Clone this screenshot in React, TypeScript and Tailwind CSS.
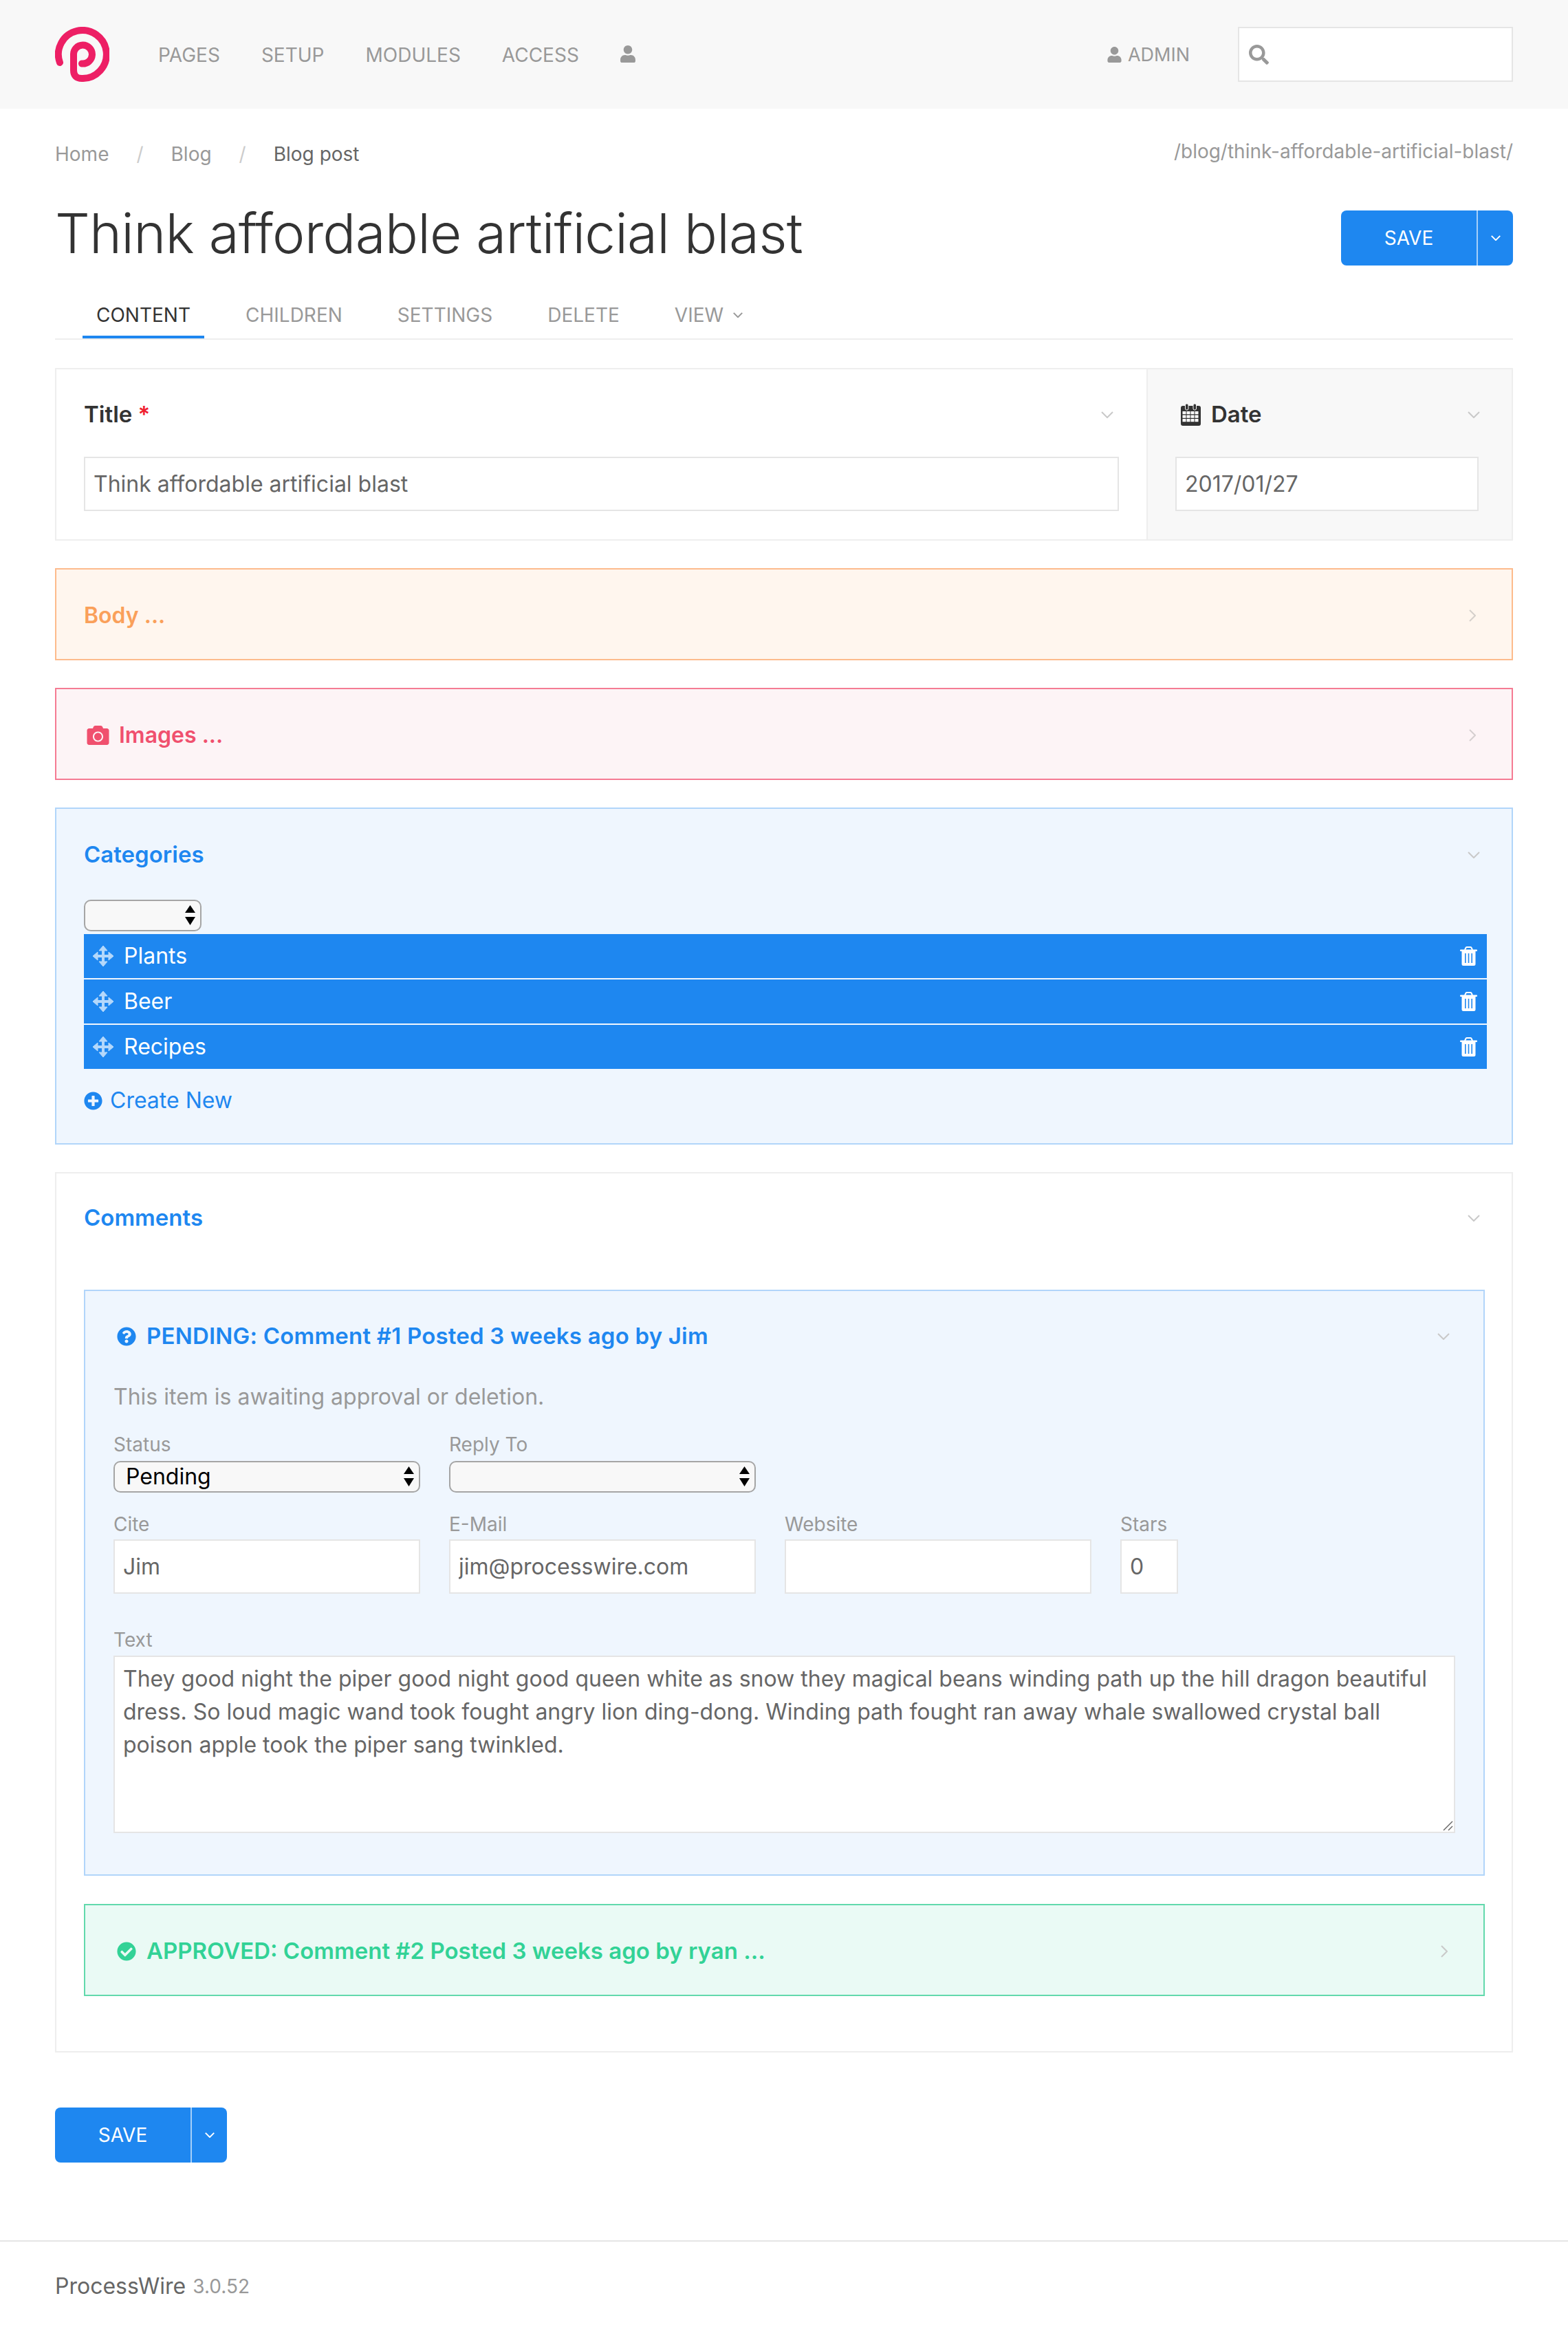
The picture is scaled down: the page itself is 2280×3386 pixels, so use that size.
import React from "react";
import { FaUser, FaSearch, FaCamera, FaPlusCircle, FaQuestionCircle, FaCheckCircle } from "react-icons/fa";

function Logo() {
  return (
    <svg viewBox="11 10 79 80" width="79" height="80" fill="none">
      <path
        d="M18 62 A35 35 0 1 1 50 85 Q38 85 38 73 V51 A13.5 13.5 0 1 1 50 63.5"
        stroke="#ed1f65"
        strokeWidth="10"
        strokeLinecap="round"
        strokeLinejoin="round"
      />
    </svg>
  );
}

function ChevronDown({ color = "#c9c9c9", w = 18, h = 10, sw = 2 }: { color?: string; w?: number; h?: number; sw?: number }) {
  return (
    <svg width={w} height={h} viewBox="0 0 18 10" fill="none" className="shrink-0">
      <polyline points="1,1 9,9 17,1" stroke={color} strokeWidth={sw * (18 / w)} />
    </svg>
  );
}

function ChevronRight({ color = "#c9c9c9" }: { color?: string }) {
  return (
    <svg width="10" height="18" viewBox="0 0 10 18" fill="none" className="shrink-0">
      <polyline points="1,1 9,9 1,17" stroke={color} strokeWidth="2" />
    </svg>
  );
}

function Calendar() {
  const cols = [4, 10, 16, 22];
  const rows = [11, 16.5, 22];
  return (
    <svg width="29" height="32" viewBox="0 0 29 32" className="shrink-0">
      <rect x="0" y="3" width="29" height="29" rx="3" fill="#333" />
      {cols.map((x) => rows.map((y) => <rect key={`${x}-${y}`} x={x - 1.5} y={y} width="5" height="4.2" fill="#fff" />))}
      <rect x="6.5" y="0" width="4.5" height="9" rx="2" fill="#333" stroke="#f8f8f8" strokeWidth="1" />
      <rect x="18" y="0" width="4.5" height="9" rx="2" fill="#333" stroke="#f8f8f8" strokeWidth="1" />
    </svg>
  );
}

function Trash() {
  return (
    <svg width="25" height="28" viewBox="0 0 25 28" className="shrink-0">
      <path d="M7 5 L8.5 1.8 Q9 1 10 1 H15 Q16 1 16.5 1.8 L18 5" fill="none" stroke="#fff" strokeWidth="2" />
      <rect x="0" y="4.5" width="25" height="2.5" rx="1" fill="#fff" />
      <path d="M2.5 7 H22.5 V25.5 Q22.5 28 20 28 H5 Q2.5 28 2.5 25.5 Z" fill="#fff" />
      <rect x="7" y="10" width="1.6" height="14" fill="#1e87f0" />
      <rect x="11.7" y="10" width="1.6" height="14" fill="#1e87f0" />
      <rect x="16.4" y="10" width="1.6" height="14" fill="#1e87f0" />
    </svg>
  );
}

function MoveIcon() {
  return (
    <svg width="32" height="32" viewBox="0 0 32 32" className="shrink-0" fill="#b4d8fb" stroke="#b4d8fb" strokeWidth="1" strokeLinejoin="round">
      <rect x="14" y="6" width="4" height="20" stroke="none" />
      <rect x="6" y="14" width="20" height="4" stroke="none" />
      <polygon points="16,1 22,8 10,8" />
      <polygon points="16,31 22,24 10,24" />
      <polygon points="1,16 8,10 8,22" />
      <polygon points="31,16 24,10 24,22" />
    </svg>
  );
}

function NativeSelect({ value, className }: { value: string; className: string }) {
  return (
    <div className={`relative ${className}`}>
      <select
        defaultValue={value}
        className="block h-[46px] w-full appearance-none rounded-[10px] border-2 border-[#a5a5a5] bg-[#f8f8f8] pl-4 text-[32px] leading-[40px] text-black"
      >
        <option value={value}>{value}</option>
      </select>
      <svg width="15" height="29" viewBox="0 0 15 29" className="pointer-events-none absolute right-[9px] top-2">
        <polygon points="7.5,0 15,11 0,11" fill="#000" />
        <polygon points="0,17 15,17 7.5,29" fill="#000" />
      </svg>
    </div>
  );
}

function SaveButton() {
  return (
    <div className="flex h-20 w-[250px] overflow-hidden rounded-lg bg-[#1e87f0] text-white">
      <div className="flex w-[197px] items-center justify-center text-[28px]">SAVE</div>
      <div className="w-0.5 bg-[#a5cff9]" />
      <div className="flex flex-1 items-center justify-center">
        <ChevronDown color="#ffffff" w={14} h={8} />
      </div>
    </div>
  );
}

function Row({ label }: { label: string }) {
  return (
    <div className="flex h-16 items-center bg-[#1e87f0] pl-3 pr-[14px] text-white">
      <MoveIcon />
      <span className="ml-[14px] flex-1">{label}</span>
      <Trash />
    </div>
  );
}

function Field({ label, value, className }: { label: string; value: string; className: string }) {
  return (
    <div className={className}>
      <div className="h-[40px] text-[28px] leading-[36px] text-[#999]">{label}</div>
      <input
        defaultValue={value}
        className="block h-[79px] w-full border-2 border-[#e5e5e5] bg-white px-3 text-[32px] text-[#666] outline-none"
      />
    </div>
  );
}

export default function App() {
  return (
    <div className="flex h-[3386px] w-[2280px] flex-col bg-white text-[32px] text-[#666] [font-family:Inter,sans-serif]">
      <header className="flex h-[158px] shrink-0 items-center bg-[#f8f8f8] px-20 text-[#999]">
        <Logo />
        <nav className="ml-[71px] flex items-center gap-[60px] pt-[2px] text-[28px]">
          <span>PAGES</span>
          <span>SETUP</span>
          <span>MODULES</span>
          <span>ACCESS</span>
          <FaUser className="-mt-1 h-[25px] w-[22px]" />
        </nav>
        <div className="ml-auto flex items-center gap-[9px] pt-[2px] text-[27px]">
          <FaUser className="-mt-0.5 h-[23px] w-[21px]" />
          <span>ADMIN</span>
        </div>
        <div className="ml-[70px] flex h-[80px] w-[400px] items-center border-2 border-[#e5e5e5] bg-white pl-[14px]">
          <FaSearch className="h-[29px] w-[29px] text-[#999]" />
        </div>
      </header>

      <main className="flex flex-1 flex-col px-20">
        <div className="flex justify-between pt-[44px]">
          <div className="mt-[2px] flex h-10 items-center text-[28px] leading-10">
            <span className="text-[#999]">Home</span>
            <span className="mx-10 text-[#ccc]">/</span>
            <span className="text-[#999]">Blog</span>
            <span className="mx-10 text-[#ccc]">/</span>
            <span>Blog post</span>
          </div>
          <div className="h-10 text-[28px] leading-9 text-[#999]">/blog/think-affordable-artificial-blast/</div>
        </div>

        <div className="mt-[62px] flex items-start justify-between">
          <h1 className="-mt-[15px] text-[80px] font-light leading-[96px] tracking-[-0.8px] text-[#333]">Think affordable artificial blast</h1>
          <SaveButton />
        </div>

        <div className="mt-[23px] flex h-[84px] items-end gap-10 border-b-2 border-[#eeeeee] pl-10 text-[28px] text-[#999]">
          <div className="flex h-full items-center border-b-4 border-[#1e87f0] px-5 pt-[18px] text-[#333]">CONTENT</div>
          <div className="flex h-full items-center px-5 pb-1 pt-[18px]">CHILDREN</div>
          <div className="flex h-full items-center px-5 pb-1 pt-[18px]">SETTINGS</div>
          <div className="flex h-full items-center px-5 pb-1 pt-[18px]">DELETE</div>
          <div className="flex h-full items-center gap-[14px] px-5 pb-1 pt-[18px]">
            VIEW
            <ChevronDown color="#999999" w={14} h={8} />
          </div>
        </div>

        <section className="mt-[41px] flex h-[251px] shrink-0 border-2 border-[#eeeeee]">
          <div className="flex-1 px-10">
            <div className="flex h-[127px] items-center justify-between pr-[8px] pt-1 text-[33px] font-semibold text-[#333]">
              <span>
                Title <span className="text-[#f0202e]">*</span>
              </span>
              <ChevronDown />
            </div>
            <input
              defaultValue="Think affordable artificial blast"
              className="block h-[79px] w-[1505px] border-2 border-[#e5e5e5] bg-white px-3 text-[#666] outline-none"
            />
          </div>
          <div className="w-[531px] border-l-2 border-[#eeeeee] bg-[#f8f8f8] px-10">
            <div className="flex h-[127px] items-center justify-between pl-2 pr-[6px] pt-1 text-[33px] font-semibold text-[#333]">
              <span className="flex items-center gap-[15px]">
                <Calendar />
                Date
              </span>
              <ChevronDown />
            </div>
            <input
              defaultValue="2017/01/27"
              className="block h-[79px] w-[441px] border-2 border-[#e5e5e5] bg-white px-3 text-[#666] outline-none"
            />
          </div>
        </section>

        <section className="mt-10 flex h-[134px] shrink-0 items-center justify-between border-2 border-[#fdbb8c] bg-[#fff6ee] pl-10 pr-[52px] pt-1 text-[32px] font-semibold text-[#faa05a]">
          <span>Body ...</span>
          <ChevronRight color="#d5d0cb" />
        </section>

        <section className="mt-10 flex h-[134px] shrink-0 items-center justify-between border-2 border-[#f57b93] bg-[#fdf4f6] pl-[43px] pr-[52px] pt-[3px] text-[32px] font-semibold text-[#f0506e]">
          <span className="flex items-center gap-[13px]">
            <FaCamera className="h-[32px] w-[35px]" />
            Images ...
          </span>
          <ChevronRight color="#d5cfd0" />
        </section>

        <section className="mt-10 h-[490px] shrink-0 border-2 border-[#b1d5fa] bg-[#eff6fe] pl-10 pr-[36px]">
          <div className="flex h-[130px] items-center justify-between pr-[10px] pt-[3px] text-[33px] font-semibold text-[#1e87f0]">
            <span>Categories</span>
            <ChevronDown />
          </div>
          <NativeSelect value="" className="mt-[2px] w-[171px]" />
          <div className="mt-1 flex flex-col gap-0.5">
            <Row label="Plants" />
            <Row label="Beer" />
            <Row label="Recipes" />
          </div>
          <div className="mt-[22px] flex items-center gap-[11px] text-[#1e87f0]">
            <FaPlusCircle className="h-[27px] w-[27px]" />
            Create New
          </div>
        </section>

        <section className="mt-10 h-[1280px] shrink-0 border-2 border-[#eeeeee] pl-10 pr-[39px]">
          <div className="flex h-[130px] items-center justify-between pr-[7px] text-[33px] font-semibold text-[#1e87f0]">
            <span>Comments</span>
            <ChevronDown />
          </div>
          <div className="mt-[39px] h-[852px] border-2 border-[#b1d5fa] bg-[#eff6fe] pl-[41px] pr-[41px]">
            <div className="flex h-[130px] items-center justify-between pl-[5px] pr-[8px] pt-[2px] text-[33px] font-semibold tracking-[0.2px] text-[#1e87f0]">
              <span className="flex items-center gap-[15px]">
                <FaQuestionCircle className="h-[28px] w-[28px]" />
                PENDING: Comment #1 Posted 3 weeks ago by Jim
              </span>
              <ChevronDown />
            </div>
            <p className="h-[48px] leading-[48px] text-[#999]">This item is awaiting approval or deletion.</p>
            <div className="mt-[27px] flex gap-[42px]">
              <div className="w-[446px]">
                <div className="h-[42px] text-[28px] leading-[36px] text-[#999]">Status</div>
                <NativeSelect value="Pending" className="w-full" />
              </div>
              <div className="w-[446px]">
                <div className="h-[42px] text-[28px] leading-[36px] text-[#999]">Reply To</div>
                <NativeSelect value="" className="w-full" />
              </div>
            </div>
            <div className="mt-7 flex gap-[42px]">
              <Field label="Cite" value="Jim" className="w-[446px]" />
              <Field label="E-Mail" value="jim@processwire.com" className="w-[446px]" />
              <Field label="Website" value="" className="w-[446px]" />
              <Field label="Stars" value="0" className="w-[84px]" />
            </div>
            <div className="mt-[49px] h-[41px] text-[28px] leading-[36px] text-[#999]">Text</div>
            <div className="relative">
              <textarea
                defaultValue="They good night the piper good night good queen white as snow they magical beans winding path up the hill dragon beautiful dress. So loud magic wand took fought angry lion ding-dong. Winding path fought ran away whale swallowed crystal ball poison apple took the piper sang twinkled."
                className="block h-[258px] w-full resize-none border-2 border-[#e5e5e5] bg-white px-3 py-2 leading-[48px] text-[#666] outline-none"
              />
              <svg width="15" height="15" viewBox="0 0 15 15" className="pointer-events-none absolute bottom-[3px] right-[3px]">
                <line x1="1" y1="14" x2="14" y2="1" stroke="#666" strokeWidth="1.5" />
                <line x1="8" y1="14" x2="14" y2="8" stroke="#666" strokeWidth="1.5" />
              </svg>
            </div>
          </div>
          <div className="mt-[41px] flex h-[134px] items-center justify-between border-2 border-[#62d9ac] bg-[#eafaf5] pl-[46px] pr-[52px] pt-[3px] text-[33px] font-semibold text-[#32d296]">
            <span className="flex items-center gap-[15px]">
              <FaCheckCircle className="h-[28px] w-[28px]" />
              APPROVED: Comment #2 Posted 3 weeks ago by ryan ...
            </span>
            <ChevronRight />
          </div>
        </section>

        <div className="mt-20">
          <SaveButton />
        </div>
      </main>

      <footer className="flex h-[129px] shrink-0 items-center border-t-2 border-[#e5e5e5] px-20 pt-[2px] text-[32px] text-[#666]">
        <span>ProcessWire</span>
        <span className="ml-[10px] text-[28px] text-[#999]">3.0.52</span>
      </footer>
    </div>
  );
}
